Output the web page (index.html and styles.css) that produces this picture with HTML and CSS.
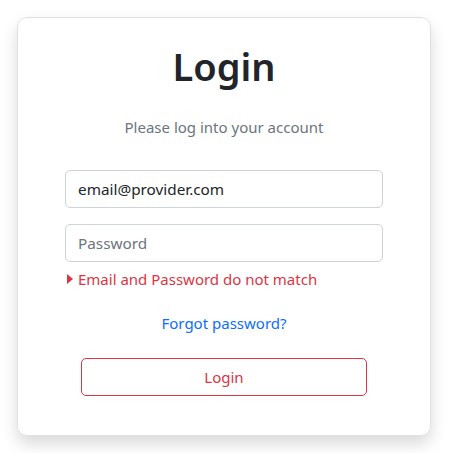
FILE: index.html
```html
<!DOCTYPE html>
<html>
<head>
<meta charset="utf-8">
<link rel="stylesheet" href="styles.css">
</head>
<body>
<div class="card">
  <h1 class="title">Login</h1>
  <p class="subtitle">Please log into your account</p>
  <div class="fields">
    <input class="field" type="text" value="email@provider.com">
    <input class="field" type="password" placeholder="Password">
    <div class="error"><span class="caret"></span>Email and Password do not match</div>
  </div>
  <a class="forgot" href="#">Forgot password?</a>
  <button class="btn">Login</button>
</div>
</body>
</html>
```
FILE: styles.css
```css
html, body { margin: 0; background: #fff; }
body {
  padding: 17px;
  font-family: "Noto Sans", "Open Sans", sans-serif;
  color: #212529;
}
.card {
  box-sizing: border-box;
  width: 414px;
  height: 419px;
  border: 1px solid #dee2e6;
  border-radius: 10px;
  box-shadow: 0 8px 16px rgba(0,0,0,0.15);
  display: flex;
  flex-direction: column;
  align-items: center;
  padding: 24px 47px 0;
}
.title {
  margin: 0;
  font-size: 38px;
  font-weight: 600;
  line-height: 48px;
}
.subtitle {
  margin: 26px 0 0;
  font-size: 15px;
  line-height: 22px;
  color: #6c757d;
}
.fields {
  align-self: stretch;
  display: flex;
  flex-direction: column;
  margin-top: 32px;
}
.field {
  box-sizing: border-box;
  height: 38px;
  border: 1px solid #ced4da;
  border-radius: 5px;
  padding: 0 12px;
  font-family: inherit;
  font-size: 15.3px;
  color: #212529;
  outline: none;
}
.field + .field { margin-top: 16px; }
.field::placeholder { color: #6c757d; }
.error {
  display: flex;
  align-items: center;
  margin-top: 6px;
  font-size: 15px;
  line-height: 22px;
  color: #dc3545;
}
.caret {
  width: 0; height: 0;
  border-top: 5px solid transparent;
  border-bottom: 5px solid transparent;
  border-left: 6px solid #dc3545;
  margin: 0 5px 0 2px;
}
.forgot {
  margin-top: 22px;
  font-size: 15px;
  line-height: 22px;
  color: #0d6efd;
  text-decoration: none;
}
.btn {
  box-sizing: border-box;
  margin-top: 24px;
  width: 286px;
  height: 38px;
  background: #fff;
  border: 1px solid #dc3545;
  border-radius: 5px;
  color: #dc3545;
  font-family: inherit;
  font-size: 15px;
}
```
